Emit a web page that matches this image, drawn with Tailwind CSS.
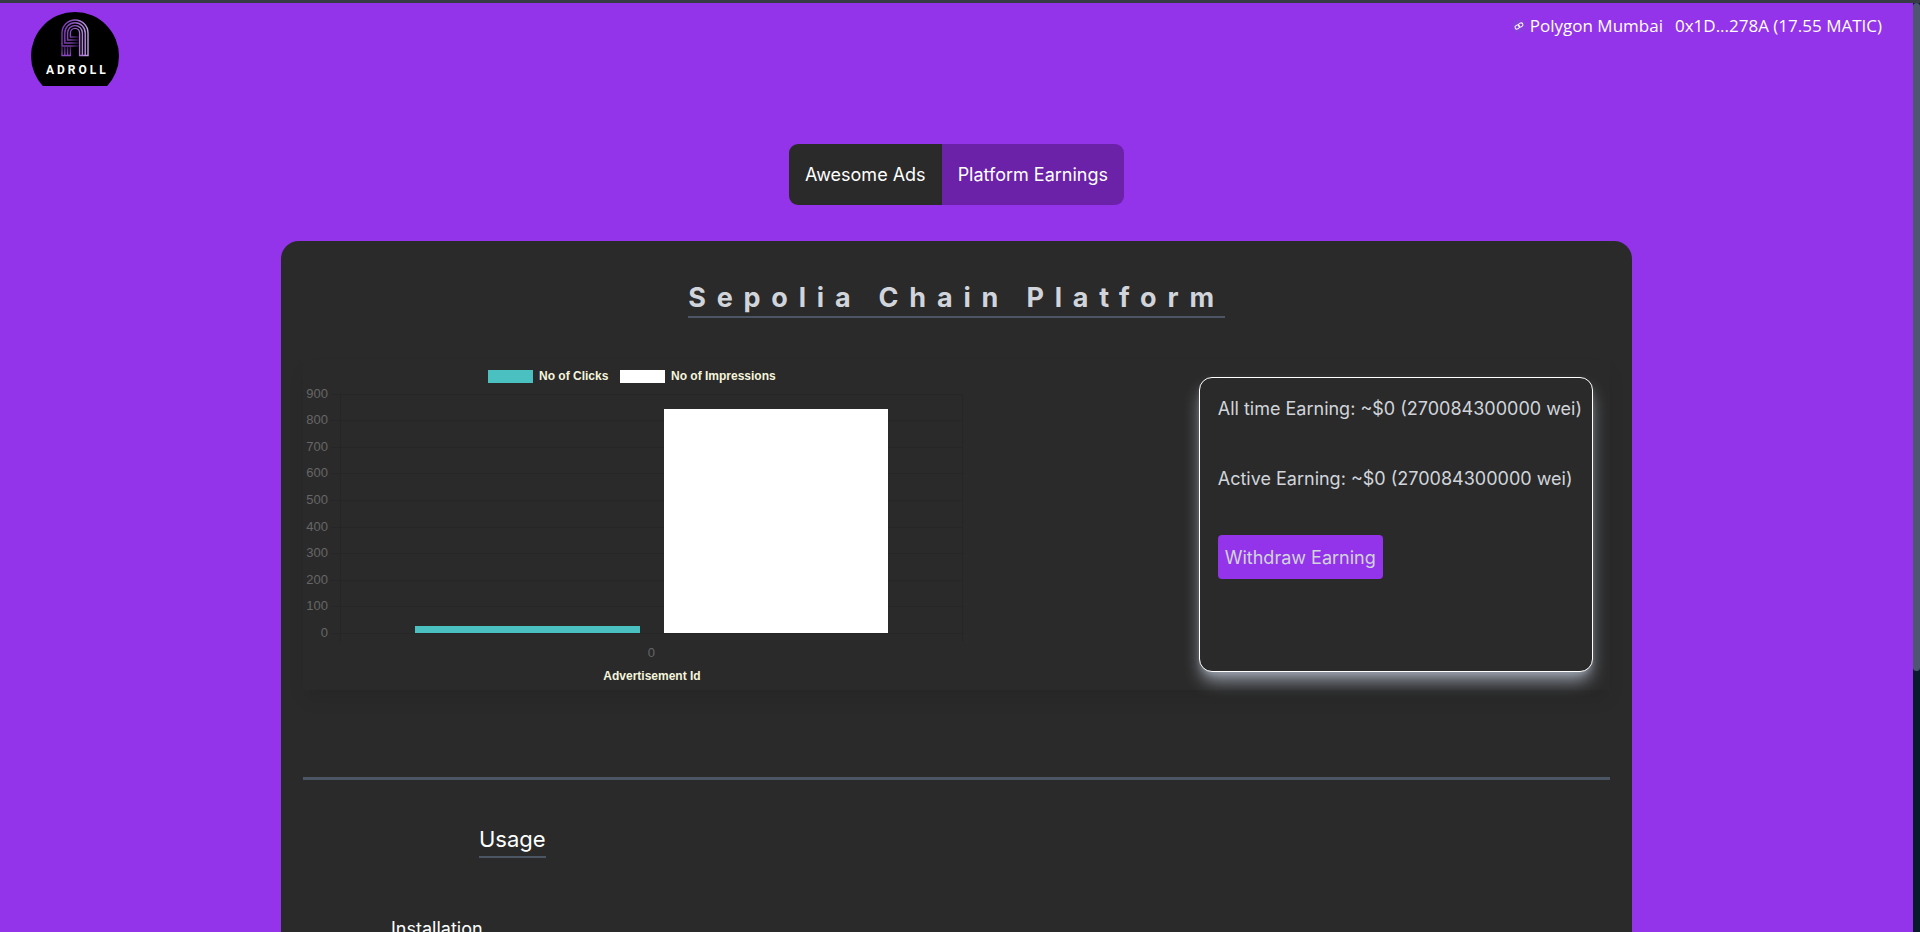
<!DOCTYPE html>
<html lang="en">
<head>
<meta charset="utf-8">
<meta name="viewport" content="width=device-width, initial-scale=1">
<title>Adroll</title>
<script src="https://cdn.jsdelivr.net/npm/@tailwindcss/browser@4"></script>
</head>
<body class="h-screen overflow-hidden bg-[#9333ea] font-['Inter',sans-serif] text-[18px] leading-[27px] text-white">
<div class="flex h-full flex-col border-t-3 border-[#373b46]">
<div class="flex min-h-0 flex-1">
  <div class="h-full min-w-0 flex-1 overflow-hidden">
    <header class="flex items-start justify-between pt-[9px] pr-[31px] pl-[31px]">
      <a href="#" aria-label="Adroll home">
        <svg class="block h-[74px] w-[88px]" viewBox="0 0 88 74">
          <defs>
            <linearGradient id="g" gradientUnits="userSpaceOnUse" x1="30" y1="0" x2="58" y2="0"><stop offset="0" stop-color="#7a35b0"/><stop offset=".5" stop-color="#8f58c4"/><stop offset="1" stop-color="#cba4ee"/></linearGradient>
            <linearGradient id="f" gradientUnits="userSpaceOnUse" x1="30" y1="0" x2="48" y2="0"><stop offset="0" stop-color="#7a35b0"/><stop offset=".5" stop-color="#7a42ab"/><stop offset="1" stop-color="#1a0a28"/></linearGradient>
            <linearGradient id="v" gradientUnits="userSpaceOnUse" x1="0" y1="34" x2="0" y2="44"><stop offset="0" stop-color="#3a1856"/><stop offset="1" stop-color="#8f4cc8"/></linearGradient>
          </defs>
          <circle cx="44" cy="44" r="44"/>
          <g fill="none" stroke="url(#g)" stroke-width="1.4">
            <path d="M31 31.500V21a13 13 0 0 1 26 0V43.500H48.600V21a4.600 4.600 0 0 0-9.200 0V24"/>
            <path d="M33.800 29V21a10.200 10.200 0 0 1 20.400 0V43.500M36.600 27V21a7.400 7.400 0 0 1 14.800 0V43.500"/>
          </g>
          <g fill="none" stroke="url(#f)" stroke-width="1.4">
            <path d="M39.400 23.500V25H48M36.600 26.500V28H48M33.800 28.500V31H48M31 31V34H48"/>
          </g>
          <path d="M31 35V43.500H39.400V35M33.800 35V43.500M36.600 35V43.500" fill="none" stroke="url(#v)" stroke-width="1.4"/>
          <text x="15" y="62" fill="#fff" font-family="Roboto, sans-serif" font-size="12" font-weight="700" letter-spacing="3">ADROLL</text>
        </svg>
      </a>
      <div class="flex items-center font-['Open_Sans',sans-serif] text-[17px] leading-[27px]">
        <svg class="mr-1 size-[14px]" viewBox="0 0 14 14" fill="none" stroke="#fff">
          <circle cx="7" cy="7" r="7" fill="#8a3ee0" stroke="none"/>
          <rect x="3" y="6.200" width="4.600" height="3.600" rx="1.800" transform="rotate(-30 5.300 8)"/>
          <rect x="6.400" y="4.200" width="4.600" height="3.600" rx="1.800" transform="rotate(-30 8.700 6)"/>
        </svg>
        <span>Polygon Mumbai</span>
        <span class="ml-3">0x1D...278A (17.55 MATIC)</span>
      </div>
    </header>

    <main>
      <nav class="mt-[58px] flex justify-center" aria-label="Sections">
        <button type="button" class="h-[61px] rounded-l-[9px] bg-[#2a2a2a] px-4">Awesome Ads</button>
        <button type="button" class="h-[61px] rounded-r-[9px] bg-[#6b21a8] px-4">Platform Earnings</button>
      </nav>

      <section class="mx-auto mt-9 max-w-[1351px] rounded-[18px] bg-[#2a2a2a] px-[22px] pt-[39px] pb-[400px]">
        <h1 class="mx-auto w-fit border-b-2 border-[#4b5563] text-[27px] leading-[36px] font-bold tracking-[0.4em] text-[#d1d5db]">Sepolia Chain Platform</h1>

        <div class="mt-[41px] flex justify-between pr-[17px] shadow-[0_11px_17px_-3px_rgba(0,0,0,0.1)]">
          <svg class="block h-[331px] w-[675px]" viewBox="303 359 675 331" role="img" aria-label="Clicks and impressions per advertisement" font-family="'Liberation Sans', sans-serif" font-size="13">
            <rect x="488" y="370" width="45" height="13" fill="#4bc0c0"/>
            <rect x="620" y="370" width="45" height="13" fill="#fff"/>
            <g fill="#f5f5dc" font-weight="700" font-size="12">
              <text x="539" y="380">No of Clicks</text>
              <text x="671" y="380">No of Impressions</text>
              <text x="652" y="680" text-anchor="middle">Advertisement Id</text>
            </g>
            <path d="M331 394.500H963M331 420.500H963M331 447.500H963M331 473.500H963M331 500.500H963M331 527.500H963M331 553.500H963M331 580.500H963M331 606.500H963M331 633.500H963M340.500 394V642M962.500 394V642" fill="none" stroke="#262626"/>
            <g fill="#666" text-anchor="end">
              <text x="328" y="398">900</text><text x="328" y="424">800</text><text x="328" y="451">700</text><text x="328" y="477">600</text><text x="328" y="504">500</text><text x="328" y="531">400</text><text x="328" y="557">300</text><text x="328" y="584">200</text><text x="328" y="610">100</text><text x="328" y="637">0</text>
              <text x="655" y="657">0</text>
            </g>
            <rect x="415" y="626" width="225" height="7" fill="#4bc0c0"/>
            <rect x="664" y="409" width="224" height="224" fill="#fff"/>
          </svg>
          <div class="mt-[18px] h-[295px] rounded-[13px] border border-white bg-[#2a2a2a] pt-[17px] pr-[10px] pl-[18px] text-[#d1d5db] shadow-[0_11px_17px_-3px_#9ca3af,0_4px_7px_-4px_#9ca3af]">
            <p>All time Earning: ~$0 (270084300000 wei)</p>
            <p class="mt-[43px]">Active Earning: ~$0 (270084300000 wei)</p>
            <button type="button" class="mt-[43px] h-[44px] rounded-[4px] bg-[#9333ea] px-[7px]">Withdraw Earning</button>
          </div>
        </div>

        <hr class="mt-[87px] border-t-3 border-[#4b5563]">
        <h2 class="mt-[43px] ml-[176px] w-fit border-b-2 border-[#4b5563] text-[22px] leading-[33px]">Usage</h2>
        <h3 class="mt-[57px] ml-[88px]">Installation</h3>
      </section>
    </main>
  </div>
  <div class="w-[7px] bg-[#081a2c]" aria-hidden="true"><div class="h-[668px] rounded-full bg-[#4d5671]"></div></div>
</div>
</div>
</body>
</html>
